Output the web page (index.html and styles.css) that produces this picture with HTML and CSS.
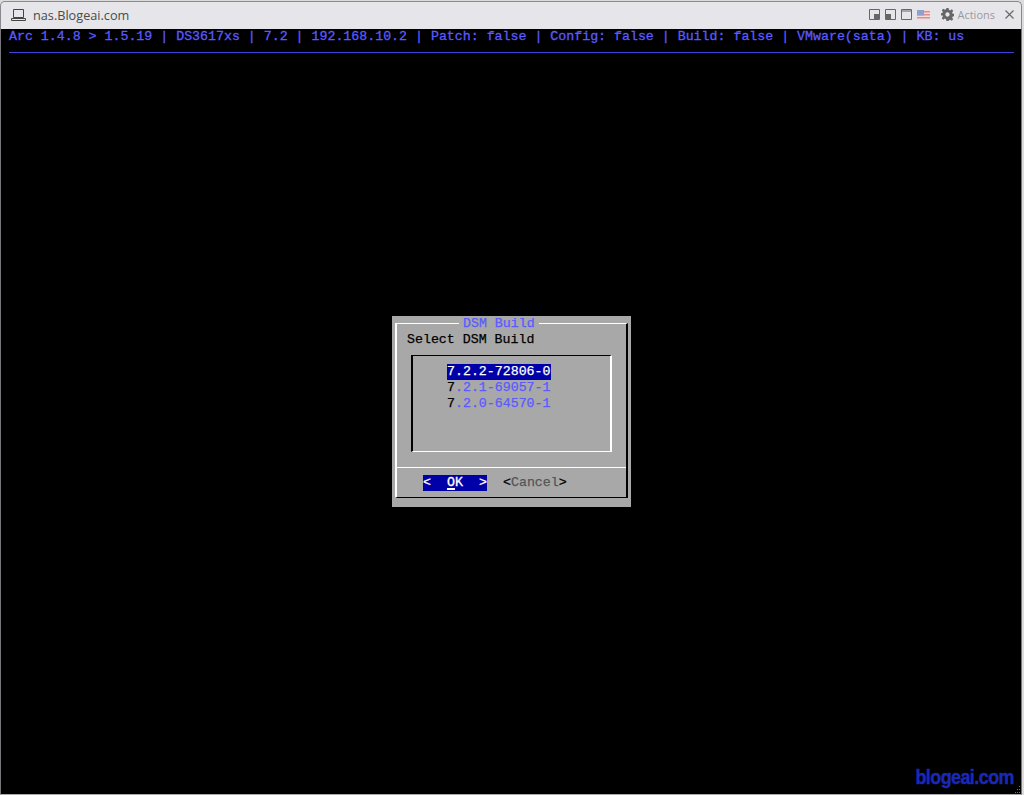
FILE: index.html
```html
<!DOCTYPE html>
<html lang="en">
<head>
<meta charset="utf-8">
<title>nas.Blogeai.com</title>
<link rel="stylesheet" href="styles.css">
</head>
<body>
<div class="window">
  <header class="titlebar">
    <svg class="laptop" width="15" height="14" viewBox="0 0 15 14"><path d="M2.5 1.5h10v8h-10z M.5 10.5h14v2H.5z" fill="none" stroke="#444" stroke-width="1"/></svg>
    <span class="host">nas.Blogeai.com</span>
    <div class="tools">
      <svg width="11" height="11" viewBox="0 0 11 11"><path d="M.5.5h10v10H.5z" fill="none" stroke="#666"/><path d="M5 5h5v5H5z" fill="#666"/></svg>
      <svg width="11" height="11" viewBox="0 0 11 11"><path d="M.5.5h10v10H.5z" fill="none" stroke="#666"/><path d="M1 5h5v5H1z" fill="#666"/></svg>
      <svg width="11" height="11" viewBox="0 0 11 11"><path d="M.5.5h10v10H.5z M.5 2h10" fill="none" stroke="#666"/></svg>
      <svg class="flag" width="13" height="10" viewBox="0 0 13 10"><path d="M0 0h13v10H0z" fill="#f3dcdc"/><path d="M0 1h13v1.4H0zM0 4h13v1.4H0zM0 7h13v1.4H0z" fill="#dc8f8f"/><path d="M0 0h7v5.5H0z" fill="#8ea0d2"/></svg>
      <svg class="gear" width="13" height="13" viewBox="0 0 24 24"><path fill="#666" fill-rule="evenodd" d="M10 0h4l.6 3.4 2.3 1 2.9-2 2.8 2.8-2 2.9 1 2.3 3.4.6v4l-3.4.6-1 2.3 2 2.9-2.8 2.8-2.9-2-2.3 1L14 24h-4l-.6-3.4-2.3-1-2.9 2-2.8-2.8 2-2.9-1-2.3L-1 14v-4l3.4-.6 1-2.3-2-2.9L4.2 1.4l2.9 2 2.3-1zM12 8a4 4 0 1 0 0 8 4 4 0 0 0 0-8z"/></svg>
      <span class="actions">Actions</span>
      <svg class="close" width="9" height="9" viewBox="0 0 9 9"><path d="M.5.5l8 8M8.5.5l-8 8" stroke="#666" stroke-width="1.1" fill="none"/></svg>
    </div>
  </header>
  <main class="terminal">
    <div class="status">
      <div class="status-text">Arc 1.4.8 &gt; 1.5.19 | DS3617xs | 7.2 | 192.168.10.2 | Patch: false | Config: false | Build: false | VMware(sata) | KB: us</div>
      <div class="status-rule"></div>
    </div>
    <div class="stage">
      <section class="dialog">
        <div class="frame">
          <h1 class="dialog-title">DSM Build</h1>
          <p class="prompt">Select DSM Build</p>
          <div class="listbox">
            <div class="item"><span class="selected">7.2.2-72806-0</span></div>
            <div class="item"><b>7</b>.2.1-69057-1</div>
            <div class="item"><b>7</b>.2.0-64570-1</div>
          </div>
          <div class="buttons">
            <span class="btn-ok"><i>&lt;</i><u>O</u>K<i>&gt;</i></span>
            <span class="btn-cancel"><b>&lt;</b>Cancel<b>&gt;</b></span>
          </div>
        </div>
      </section>
    </div>
    <div class="watermark">blogeai.com</div>
    <svg class="grip" width="6" height="7" viewBox="0 0 6 7"><path d="M4 0h1v1H4zM2 3h1v1H2zM4 3h1v1H4zM0 6h1v1H0zM2 6h1v1H2zM4 6h1v1H4z" fill="#777"/></svg>
  </main>
</div>
</body>
</html>
```
FILE: styles.css
```css
* { box-sizing: border-box; }
html, body { margin: 0; height: 100%; background: #dcdcdc; overflow: hidden; }
.window {
  height: 795px; margin: 0 2px 0 0; padding-top: 1px; display: flex; flex-direction: column;
}
.titlebar {
  height: 28px; flex: none; display: flex; align-items: center;
  background: #e6e6ea; border: 1px solid #8a8a8e; border-bottom: 0; border-radius: 5px 5px 0 0;
  padding: 0 7px 2px 10px;
  font-family: "Open Sans", "Liberation Sans", sans-serif;
}
.laptop { margin-right: 7px; }
.host { font-size: 12.7px; color: #4a4a4a; }
.tools { margin-left: auto; display: flex; align-items: center; gap: 5px; }
.gear { margin-left: 6px; }
.actions { font-size: 11px; color: #9a9a9e; margin-left: -2px; margin-right: 5px; }
.terminal {
  position: relative; flex: 1; display: flex; flex-direction: column;
  background: #000; border-left: 1px solid #77777b; border-right: 1px solid #77777b; border-bottom: 1px solid #aaa;
  font-family: "Liberation Mono", monospace; font-size: 13.28px; line-height: 16px;
}
.status { padding: 0 7px 0 8px; flex: none; }
.status-text { color: #5a5aff; white-space: pre; -webkit-text-stroke: .3px currentColor; }
.status-rule { margin-top: 7px; height: 1px; background: #4040e0; }
.stage { flex: 1; display: flex; align-items: center; justify-content: center; padding: 0 0 25px 1px; }
.dialog { width: 239px; height: 191px; background: #a8a8a8; padding: 7px 3px 9px 3px; }
.frame {
  position: relative; height: 100%; display: flex; flex-direction: column;
  border-style: solid; border-width: 1px 2px 1px 2px; border-color: #fff #000 #000 #fff;
  padding: 8px 0 0 10px;
}
.dialog-title {
  position: absolute; top: -8px; left: 62px; margin: 0; padding: 0 4px;
  background: #a8a8a8; color: #5a5aff; font: inherit; -webkit-text-stroke: .25px currentColor;
}
.prompt { margin: 0; color: #000; -webkit-text-stroke: .25px currentColor; }
.listbox {
  margin: 7px 0 0 4px; width: 201px; height: 97px; padding: 8px 0 0 34px;
  border-style: solid; border-width: 1px 2px 1px 2px; border-color: #000 #fff #fff #000;
  color: #5a5aff;
}
.item { -webkit-text-stroke: .25px currentColor; }
.item b { color: #000; font-weight: 400; }
.selected { background: #0000a8; color: #fff; display: inline-block; }
.buttons {
  margin: 15px 0 0 -10px; padding: 7px 0 0 26px; border-top: 1px solid #fff;
  display: flex; gap: 16px; align-items: flex-start; flex: 1;
}
.btn-ok {
  width: 64px; height: 16px; background: #0000a8; color: #fff; display: flex; justify-content: center;
  position: relative; -webkit-text-stroke: .3px currentColor;
}
.btn-ok i { font-style: normal; position: absolute; }
.btn-ok i:first-child { left: 0; }
.btn-ok i:last-child { right: 0; }
.btn-ok u { text-decoration-thickness: 2px; text-underline-offset: 2px; }
.btn-cancel { color: #555; -webkit-text-stroke: .25px currentColor; }
.btn-cancel b { color: #000; font-weight: 400; }
.watermark {
  position: absolute; right: 7px; bottom: 5px; color: #1a28b8; transform: scaleX(.85); transform-origin: right center;
  font: 700 21px/24px "Liberation Sans", sans-serif; letter-spacing: -.6px; -webkit-text-stroke: .5px currentColor;
}
.grip { position: absolute; right: 0; bottom: 1px; }
```
